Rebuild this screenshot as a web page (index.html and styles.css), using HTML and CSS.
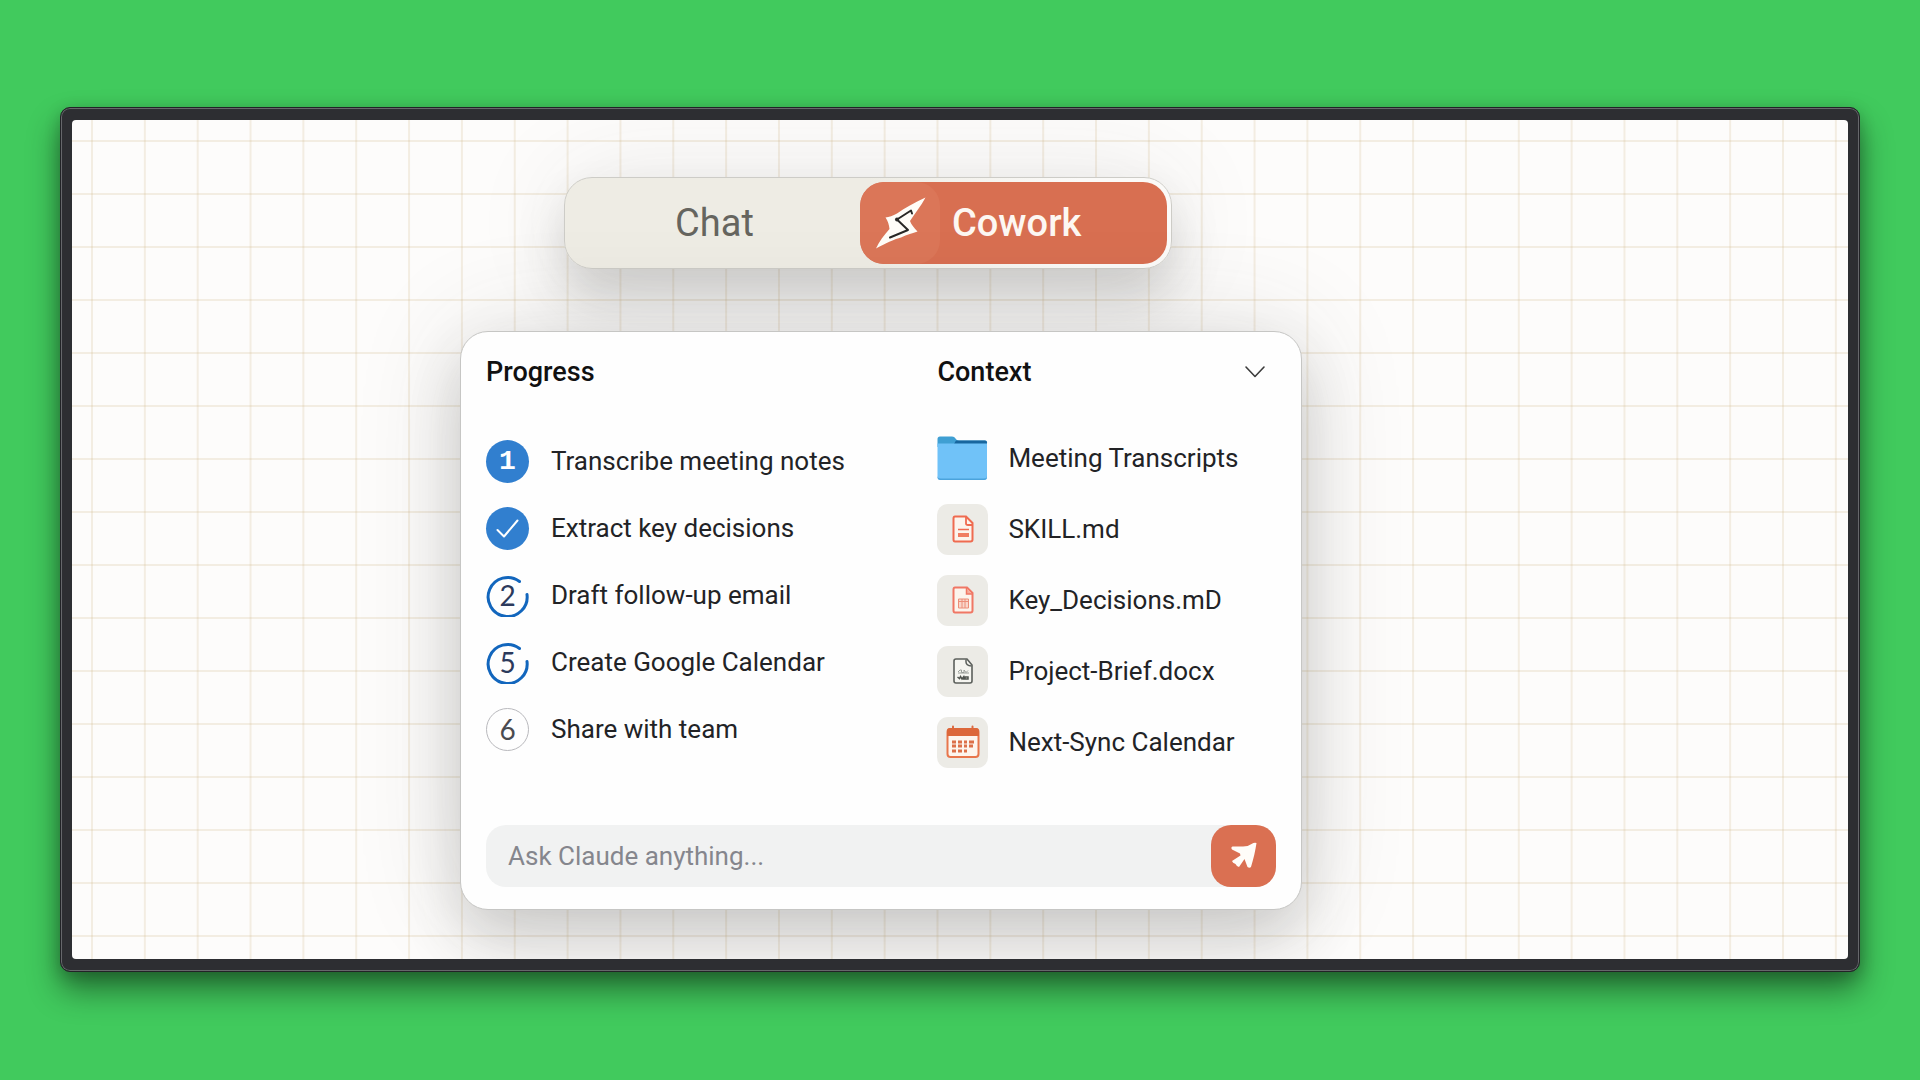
FILE: index.html
```html
<!DOCTYPE html>
<html lang="en">
<head>
  <meta charset="UTF-8" />
  <meta name="viewport" content="width=device-width, initial-scale=1.0"/>
  <title>Cowork</title>
  <link rel="stylesheet" href="styles.css">
</head>
<body>

  <main class="frame">
    <div class="screen">
      <div class="content">

        <!-- Mode switch -->
        <nav class="switch" aria-label="Mode">
          <button type="button" class="switch-chat">Chat</button>
          <button type="button" class="switch-cowork">
            <span class="bolt">
              <svg width="80" height="82" viewBox="0 0 80 82" aria-hidden="true">
                <path d="M65.500 15.500C55 20 45 26 37 31.500C33 34 29 35 25.500 35.500C28 39 29 43 29.500 47C24 53 19 60 16 66.500C26 61 35 57 41 55.500C47 52.500 53 51 57.500 49.500C54 46 51 42 50 39C55 31 61 24 65.500 15.500Z" fill="#fffdf8"/>
                <path d="M30 55.500L48 48L37 37.500L51 28.500L52 31.500" fill="none" stroke="#292826" stroke-width="2" stroke-linecap="round" stroke-linejoin="round"/>
                <circle cx="37" cy="37.500" r="2" fill="#292826"/>
              </svg>
            </span>
            Cowork
          </button>
        </nav>

        <section class="panel">
          <div class="columns">
            <div class="progress">
              <h2>Progress</h2>
              <ol class="steps">
                <li><span class="badge badge-solid">1</span>Transcribe meeting notes</li>
                <li>
                  <span class="badge badge-solid">
                    <svg width="43" height="43" viewBox="0 0 43 43" aria-label="Done"><path d="M11.500 23L18 29.500L31.500 13.500" fill="none" stroke="#fff" stroke-width="2" stroke-linecap="round" stroke-linejoin="round"/></svg>
                  </span>
                  Extract key decisions
                </li>
                <li>
                  <span class="badge badge-active">
                    <svg class="ring" width="43" height="43" viewBox="0 0 43 43" aria-hidden="true"><path d="M33.500 7.500A19.500 19.500 0 1 0 41 20.500" fill="none" stroke="#1266bd" stroke-width="3" stroke-linecap="round"/></svg>
                    2
                  </span>
                  Draft follow-up email
                </li>
                <li>
                  <span class="badge badge-active">
                    <svg class="ring" width="43" height="43" viewBox="0 0 43 43" aria-hidden="true"><path d="M33.500 7.500A19.500 19.500 0 1 0 41 20.500" fill="none" stroke="#1266bd" stroke-width="3" stroke-linecap="round"/></svg>
                    5
                  </span>
                  Create Google Calendar
                </li>
                <li><span class="badge badge-todo">6</span>Share with team</li>
              </ol>
            </div>

            <div class="context">
              <div class="context-head">
                <h2>Context</h2>
                <button type="button" class="collapse" aria-label="Collapse context">
                  <svg width="22" height="14" viewBox="0 0 22 14" aria-hidden="true"><path d="M2 2L11 11.500L20 2" fill="none" stroke="#3c3c3c" stroke-width="1.600" stroke-linecap="round" stroke-linejoin="round"/></svg>
                </button>
              </div>
              <ul class="files">
                <li>
                  <svg class="folder" width="51" height="51" viewBox="0 0 51 51" aria-hidden="true">
                    <path d="M0.500 11V6Q0.500 3.500 3 3.500H15Q17.500 3.500 18.500 5.500Q19.500 7.500 22 7.500H48Q50 7.500 50 9.500V14H0.500Z" fill="#3f9fd3"/>
                    <path d="M19 7.500H48Q50 7.500 50 9.500V11H17Z" fill="#17669f"/>
                    <path d="M0.500 10.500H50V44Q50 47 47 47H3.500Q0.500 47 0.500 44Z" fill="#70c2f8"/>
                    <path d="M0.500 43V44Q0.500 47 3.500 47H47Q50 47 50 44V43Q50 45.500 47 45.500H3.500Q0.500 45.500 0.500 43Z" fill="#4ba3dc"/>
                  </svg>
                  Meeting Transcripts
                </li>
                <li>
                  <span class="tile">
                    <svg width="22" height="28" viewBox="0 0 22 28" aria-hidden="true">
                      <path d="M3 1.500H14L20.500 8V24.500Q20.500 26.500 18.500 26.500H3Q1.500 26.500 1.500 24.500V3.500Q1.500 1.500 3 1.500Z" fill="#fcf4ed" stroke="#ef6b50" stroke-width="2"/>
                      <path d="M14 2V8.500Q14 10 16 10H20" fill="none" stroke="#ef6b50" stroke-width="1.800"/>
                      <path d="M6 14.500H17" stroke="#ef6b50" stroke-width="1.500"/>
                      <path d="M6 18H17V22H6Z" fill="#f07d62"/>
                    </svg>
                  </span>
                  SKILL.md
                </li>
                <li>
                  <span class="tile">
                    <svg width="22" height="28" viewBox="0 0 22 28" aria-hidden="true">
                      <path d="M3 1.500H15L20.500 7V24.500Q20.500 26.500 18.500 26.500H3Q1.500 26.500 1.500 24.500V3.500Q1.500 1.500 3 1.500Z" fill="#fcf4ed" stroke="#f07765" stroke-width="2"/>
                      <path d="M14.500 2V8H20" fill="#f6ac9b" stroke="#f07765" stroke-width="1.500"/>
                      <path d="M6.500 13H16.500V22H6.500ZM10 13V22M13 13V22M7 15.500H16" fill="#f9d7cb" stroke="#ec8e79" stroke-width="1"/>
                    </svg>
                  </span>
                  Key_Decisions.mD
                </li>
                <li>
                  <span class="tile">
                    <svg width="22" height="28" viewBox="0 0 22 28" aria-hidden="true">
                      <path d="M4 2H15L20 8V24Q20 26 18 26H4Q2 26 2 24V4Q2 2 4 2Z" fill="#f5f5f0" stroke="#5c605c" stroke-width="1.600"/>
                      <path d="M14 2.500V5Q14 8.500 19.500 9" fill="none" stroke="#5c605c" stroke-width="1.500"/>
                      <path d="M6 15L8 13H9.500V15.500H12V13L14 15.500L16 13.500M6 16H17" fill="none" stroke="#999d98" stroke-width="1"/>
                      <path d="M5.500 20L7.500 21.500L8.500 19.500L10 22L11.500 20V22H13V20H16V22H13" fill="none" stroke="#50544f" stroke-width="1.500"/>
                    </svg>
                  </span>
                  Project-Brief.docx
                </li>
                <li>
                  <span class="tile">
                    <svg width="34" height="34" viewBox="0 0 34 34" aria-hidden="true">
                      <path d="M7 1.500V5M26.500 1.500V5" stroke="#dc6b43" stroke-width="2" stroke-linecap="round"/>
                      <rect x="1.500" y="4" width="31" height="28" rx="3" fill="#fdf5ee" stroke="#e8764c" stroke-width="2"/>
                      <path d="M1 11V6Q1 3 4 3H30Q33 3 33 6V11Z" fill="#dc673a"/>
                      <path d="M6 17H10M12 17H16M18 17H21M23 17H28M6 21H10M12 21H16M18 21H21M23 21H27M6 26H10M12 26H16M18 26H21" stroke="#dc7049" stroke-width="3"/>
                    </svg>
                  </span>
                  Next-Sync Calendar
                </li>
              </ul>
            </div>
          </div>

          <form class="ask">
            <input type="text" aria-label="Ask Claude" placeholder="Ask Claude anything...">
            <button type="button" class="send" aria-label="Send">
              <svg width="28" height="28" viewBox="0 0 28 28" aria-hidden="true">
                <path d="M26.500 1C25.500 8 23.500 17 21 25Q19.500 26.500 17.500 25L14.500 17L9 25Q7 25 5.500 22Q2.500 21 2 19L10.500 13.500L10 11.500L2 7.500Q0.500 5.500 2.500 4.500H13Q18 4.500 21.500 2Q24.500 0 26.500 1Z" fill="#fffdf9"/>
              </svg>
            </button>
          </form>
        </section>

      </div>
    </div>
  </main>

</body>
</html>
```
FILE: styles.css
```css
* {
  box-sizing: border-box;
}
body {
  margin: 0;
  min-height: 100vh;
  display: flex;
  align-items: center;
  padding: 0 60px 2px;
  background: #41ca5d;
  color: #222326;
  font-family: Roboto, "Liberation Sans", sans-serif;
  font-size: 26px;
}
button, input {
  font: inherit;
  color: inherit;
  border: none;
  padding: 0;
  background: none;
}
button {
  cursor: pointer;
}
svg {
  display: block;
  flex: none;
}

/* Dark bezel and gridded screen */
.frame {
  flex: 1;
  padding: 12px 11px;
  background: #2d2e32;
  border: 1px solid #222327;
  border-radius: 10px;
  box-shadow: inset 0 0 0 1px #66676b, 0 18px 32px rgba(0, 0, 0, 0.45), 0 4px 16px rgba(0, 0, 0, 0.2);
}
.screen {
  padding: 57px 24px 49px 388px;
  border-radius: 4px;
  background-color: #fdfcfb;
  background-image:
    linear-gradient(to right, rgba(205, 175, 125, 0.2) 2px, transparent 2px),
    linear-gradient(to bottom, rgba(205, 175, 125, 0.2) 2px, transparent 2px);
  background-size: calc(100% / 33.6) 53px;
  background-position: 19px 20px;
  overflow: hidden;
}
.content {
  display: flex;
  flex-direction: column;
  align-items: flex-start;
  gap: 62px;
  max-width: 842px;
}

/* Chat / Cowork switch */
.switch {
  display: flex;
  width: 608px;
  max-width: 100%;
  height: 92px;
  margin-left: 104px;
  padding: 4px;
  border: 1px solid #cdccc7;
  border-radius: 28px;
  background: linear-gradient(to right, #eeece4 50%, #fbfaf8 85%);
  box-shadow: 0 30px 50px rgba(60, 60, 55, 0.2), 0 0 100px rgba(60, 60, 55, 0.1);
  font-size: 38px;
}
.switch-chat {
  flex: 1;
  color: #66655f;
}
.switch-cowork {
  display: flex;
  align-items: center;
  gap: 12px;
  width: 307px;
  border-radius: 24px;
  overflow: hidden;
  background: #d86f51;
  color: #fdf7f2;
  font-weight: 500;
}
.bolt {
  border-radius: 24px;
  background: #db7658;
}

/* Panel */
.panel {
  width: 100%;
  padding: 24px 25px 22px;
  border: 1px solid #c6c6c4;
  border-radius: 28px;
  background: #fefefe;
  box-shadow: 0 30px 60px rgba(60, 60, 55, 0.2), 0 0 110px rgba(60, 60, 55, 0.14);
}
.columns {
  display: grid;
  grid-template-columns: 4fr 3fr;
}
h2 {
  margin: 0;
  font-size: 27px;
  line-height: 32px;
  font-weight: 500;
  color: #111;
}
.context-head {
  display: flex;
  justify-content: space-between;
  align-items: center;
  padding-right: 10px;
}
.steps, .files {
  display: flex;
  flex-direction: column;
  margin: 0;
  padding: 0;
  list-style: none;
}
.steps {
  margin-top: 52px;
  gap: 24px;
}
.files {
  margin-top: 45px;
  gap: 20px;
}
.steps li, .files li {
  display: flex;
  align-items: center;
}
.steps li {
  gap: 22px;
}
.files li {
  gap: 20px;
}
.badge {
  position: relative;
  display: flex;
  justify-content: center;
  align-items: center;
  flex: none;
  width: 43px;
  height: 43px;
  border-radius: 50%;
  font-family: Lato, sans-serif;
  font-size: 28px;
}
.badge-solid {
  background: #317fcf;
  color: white;
  font-family: "Liberation Mono", monospace;
  font-weight: bold;
}
.badge-active {
  color: #2c3a5c;
}
.badge-todo {
  border: 1px solid #b9b9bd;
  color: #4a4b50;
}
.ring {
  position: absolute;
  top: 0;
  left: 0;
}
.tile {
  display: flex;
  justify-content: center;
  align-items: center;
  flex: none;
  width: 51px;
  height: 51px;
  border-radius: 11px;
  background: #ecebe6;
}

/* Prompt field */
.ask {
  display: flex;
  height: 62px;
  margin-top: 57px;
  border-radius: 20px;
  background: #f1f2f2;
}
.ask input {
  flex: 1;
  min-width: 0;
  padding-left: 22px;
  outline: none;
}
.ask input::placeholder {
  color: #85868d;
  opacity: 1;
}
.send {
  display: flex;
  justify-content: center;
  align-items: center;
  width: 65px;
  border-radius: 20px;
  background: #da7052;
}
```
